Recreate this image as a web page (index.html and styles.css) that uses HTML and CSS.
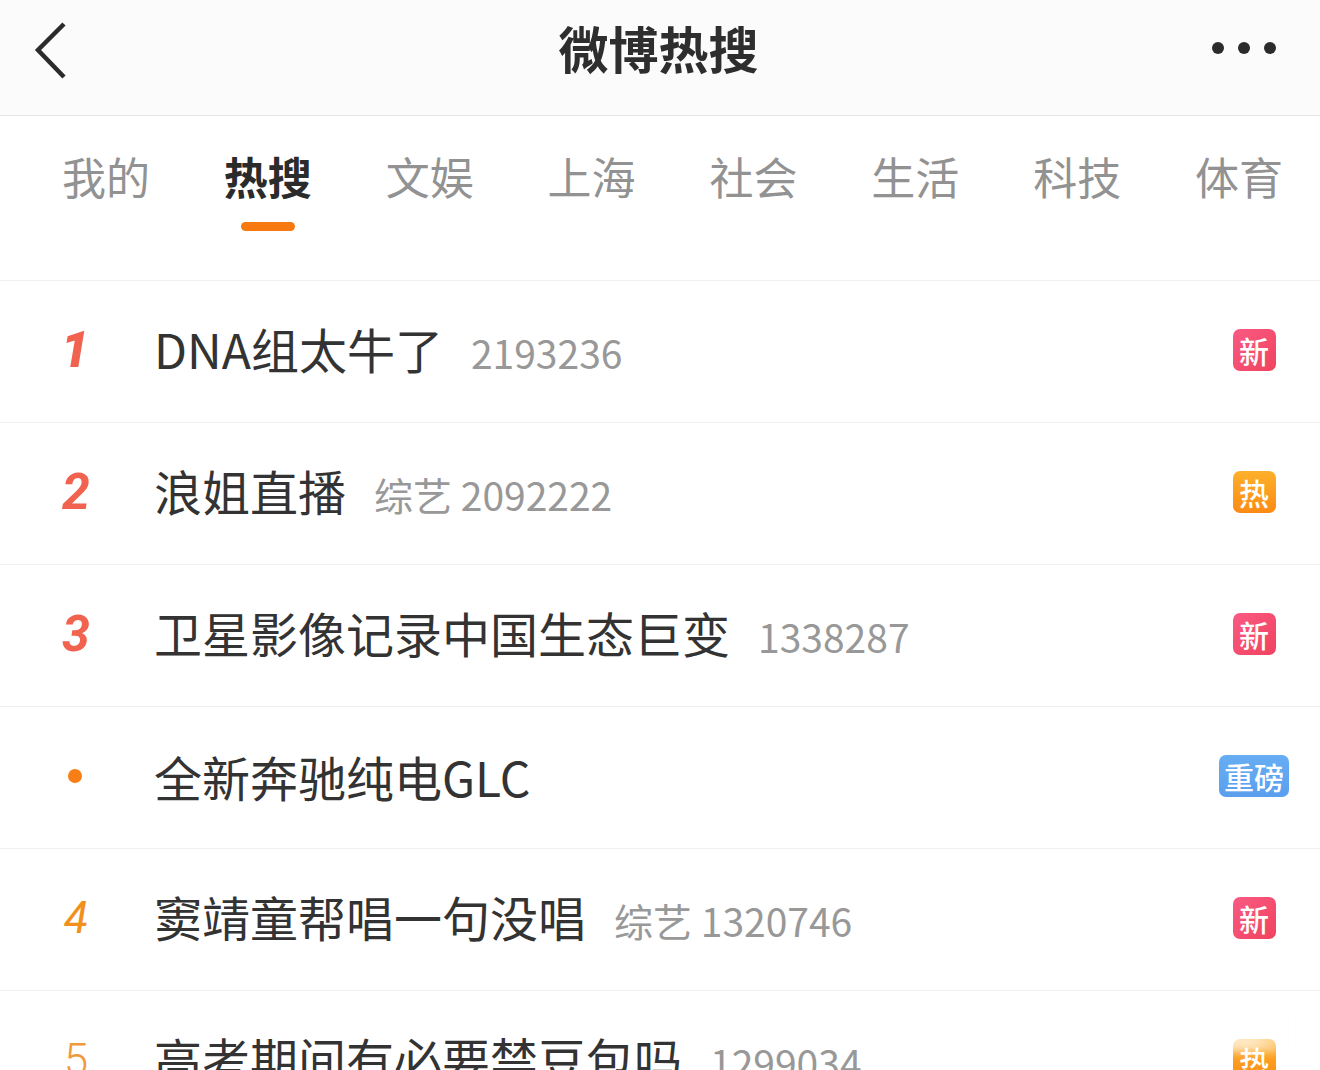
FILE: index.html
```html
<!DOCTYPE html>
<html lang="zh-CN">
<head>
<meta charset="utf-8">
<title>微博热搜</title>
<link rel="stylesheet" href="styles.css">
</head>
<body>
<div class="page">
  <header class="topbar">
    <div class="back">
      <svg width="40" height="60" viewBox="0 0 40 60"><polyline points="31,2 5,28 31,55" fill="none" stroke="#2b2b2b" stroke-width="4.5" stroke-linecap="butt" stroke-linejoin="miter"/></svg>
    </div>
    <h1 class="title">微博热搜</h1>
    <div class="more"><span></span><span></span><span></span></div>
  </header>

  <nav class="tabs">
    <div class="tab">我的</div>
    <div class="tab active">热搜<i class="bar"></i></div>
    <div class="tab">文娱</div>
    <div class="tab">上海</div>
    <div class="tab">社会</div>
    <div class="tab">生活</div>
    <div class="tab">科技</div>
    <div class="tab">体育</div>
  </nav>

  <ul class="list">
    <li class="row">
      <span class="rank top r1">1</span>
      <span class="text">DNA组太牛了<em class="count">2193236</em></span>
      <span class="tagbox"><b class="tag new">新</b></span>
    </li>
    <li class="row">
      <span class="rank top">2</span>
      <span class="text">浪姐直播<em class="count">综艺 2092222</em></span>
      <span class="tagbox"><b class="tag hot">热</b></span>
    </li>
    <li class="row">
      <span class="rank top">3</span>
      <span class="text">卫星影像记录中国生态巨变<em class="count">1338287</em></span>
      <span class="tagbox"><b class="tag new">新</b></span>
    </li>
    <li class="row">
      <span class="rank"><i class="dot"></i></span>
      <span class="text">全新奔驰纯电GLC</span>
      <span class="tagbox"><b class="tag big">重磅</b></span>
    </li>
    <li class="row">
      <span class="rank r4">4</span>
      <span class="text">窦靖童帮唱一句没唱<em class="count">综艺 1320746</em></span>
      <span class="tagbox"><b class="tag new">新</b></span>
    </li>
    <li class="row">
      <span class="rank r5">5</span>
      <span class="text">高考期间有必要禁豆包吗<em class="count">1299034</em></span>
      <span class="tagbox"><b class="tag hot">热</b></span>
    </li>
  </ul>
  <div class="watermark"></div>
</div>
</body>
</html>
```

FILE: styles.css
```css
* { box-sizing: border-box; margin: 0; padding: 0; }
html, body { background: #fff; }
body {
  font-family: "Noto Sans CJK SC", "Noto Sans", sans-serif;
  color: #333;
  width: 1320px;
  height: 1070px;
  overflow: hidden;
}
.page { position: relative; width: 1320px; height: 1070px; overflow: hidden; }

.topbar {
  height: 116px;
  background: #fbfbfb;
  border-bottom: 1px solid #e6e6e6;
  display: flex;
  align-items: center;
  justify-content: space-between;
  padding: 0 44px 22px 33px;
}
.back { width: 40px; height: 60px; margin-top: 10px; }
.back svg { display: block; }
.title {
  font-size: 50px;
  font-weight: 700;
  color: #2e2e2e;
  line-height: 60px;
  margin-left: 32px;
}
.more { display: flex; gap: 14px; margin-top: 2px; }
.more span { width: 12px; height: 12px; border-radius: 50%; background: #2b2b2b; display: block; }

.tabs {
  display: flex;
  height: 165px;
  padding: 38px 0 0 25px;
  border-bottom: 1px solid #efefef;
}
.tab {
  width: 162px;
  display: flex;
  flex-direction: column;
  align-items: center;
  font-size: 44px;
  line-height: 44px;
  color: #929292;
}
.tab.active { color: #2b2b2b; font-weight: 700; }
.bar {
  display: block;
  width: 54px;
  height: 9px;
  border-radius: 5px;
  background: #f7790f;
  margin-top: 24px;
}

.list { list-style: none; }
.row {
  height: 142px;
  border-bottom: 1px solid #efefef;
  display: flex;
  align-items: center;
  padding-bottom: 4px;
}
.rank {
  width: 152px;
  flex: none;
  display: flex;
  justify-content: center;
  font-family: Roboto, "Liberation Sans", sans-serif;
  font-size: 50px;
  line-height: 50px;
}
.rank.top { color: #f1624f; font-weight: 700; font-style: italic; }
.rank.r1 { padding-right: 2px; font-weight: 900; }
.rank.r4 { color: #f2901c; font-style: italic; font-weight: 400; font-size: 44px; }
.rank.r5 { color: #ef9a3c; font-weight: 300; font-size: 44px; }
.dot { display: block; width: 14px; height: 14px; border-radius: 50%; background: #f87f15; margin-left: -2px; }

.text {
  flex: 1;
  font-size: 48px;
  line-height: 60px;
  color: #333;
  white-space: nowrap;
  margin-left: 2px;
}
.count {
  font-style: normal;
  font-size: 39px;
  color: #989898;
  margin-left: 28px;
}
.tagbox {
  width: 100px;
  flex: none;
  margin-right: 16px;
  display: flex;
  justify-content: center;
}
.tag {
  display: block;
  height: 42px;
  min-width: 43px;
  padding: 0 6px;
  border-radius: 7px;
  color: #fff;
  font-weight: 500;
  font-size: 30px;
  line-height: 42px;
  text-align: center;
}
.tag.new { background: linear-gradient(135deg, #fa5a83, #f0435f); }
.tag.hot { background: linear-gradient(180deg, #fdb02b, #fb8b14); }
.tag.big { background: linear-gradient(180deg, #66adf3, #5a9fee); padding: 0 5px; }

.watermark {
  position: absolute;
  left: 1120px;
  top: 1012px;
  width: 190px;
  height: 40px;
  background: linear-gradient(90deg, rgba(255,255,255,0) 0%, rgba(255,255,255,0.7) 30%, rgba(255,255,255,0.7) 70%, rgba(255,255,255,0) 100%);
  filter: blur(4px);
}
```
